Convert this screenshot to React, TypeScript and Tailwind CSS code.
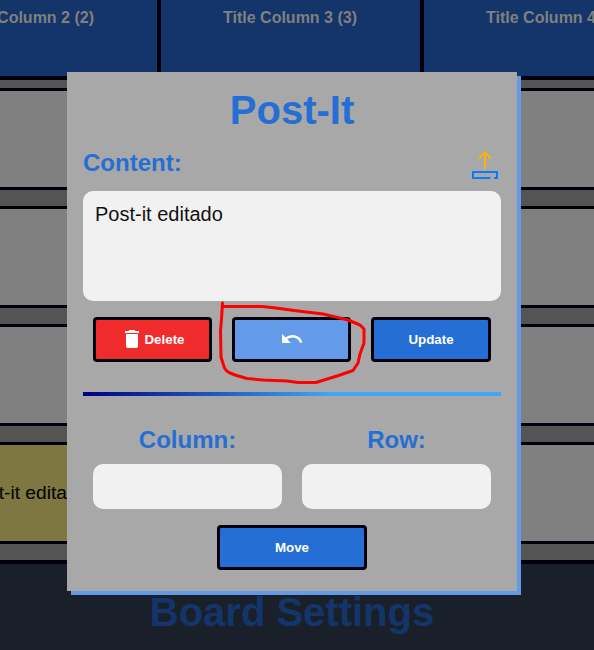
import { ReactNode } from "react";
import { MdDelete, MdUndo } from "react-icons/md";

const columns = [
  { title: "Title Column 2 (2)", post: "Post-it editado" },
  { title: "Title Column 3 (3)", post: "" },
  { title: "Title Column 4 (4)", post: "" },
];

function Slot({ text }: { text?: string }) {
  return (
    <div
      className={`flex h-[102px] shrink-0 items-center justify-center border-y-[3px] border-[#00000a] pr-px text-[19.2px] text-black ${
        text ? "bg-[#7e7741]" : "bg-[#808080]"
      }`}
    >
      {text}
    </div>
  );
}

function Column({ title, post }: { title: string; post: string }) {
  return (
    <section className="flex w-[263px] shrink-0 flex-col border-r-4 border-[#00000a]">
      <h2 className="h-20 border-b-4 border-[#00000a] bg-[#133569] pt-[6px] pr-px text-center text-base font-bold text-[#808080]">
        {title}
      </h2>
      <div className="flex h-[484px] flex-col gap-4 border-b-4 border-[#00000a] bg-[#545454] pt-2">
        <Slot />
        <Slot />
        <Slot />
        <Slot text={post} />
      </div>
    </section>
  );
}

function Button({ children, className }: { children: ReactNode; className: string }) {
  return (
    <button
      className={`flex h-[45px] items-center justify-center rounded-[4px] border-[3px] border-[#00000f] text-[13.333px] font-bold text-white ${className}`}
    >
      {children}
    </button>
  );
}

function UploadIcon() {
  return (
    <svg width="32" height="32" viewBox="0 0 32 32" fill="none" strokeWidth="2">
      <path d="M16 22.5V5.5M10 11.500l6-6 6 6" stroke="#ffb10a" />
      <path d="M21.500 31H4v-6h24v6h-3" stroke="#0a7aff" />
    </svg>
  );
}

export default function App() {
  return (
    <div className="relative h-[650px] w-[594px] overflow-hidden bg-[#1a202a] font-['Liberation_Sans',Arial,sans-serif]">
      <div className="-ml-[102px] flex w-[789px]">
        {columns.map((column) => (
          <Column key={column.title} {...column} />
        ))}
      </div>
      <h1 className="pt-[25px] pr-[10px] text-center text-[40px] leading-[46px] font-bold text-[#133569]">
        Board Settings
      </h1>

      <div
        role="dialog"
        className="absolute top-[72px] left-[67px] flex h-[519px] w-[450px] flex-col bg-[#a8a8a8] px-4 pt-[15px] shadow-[4px_4px_0_#649be8]"
      >
        <h1 className="text-center text-[40px] leading-[46px] font-bold text-[#256ed5]">Post-It</h1>
        <div className="mt-4 flex h-[28px] items-center justify-between text-2xl font-bold text-[#256ed5]">
          <span>Content:</span>
          <UploadIcon />
        </div>
        <div className="mt-[14px] h-[110px] shrink-0 rounded-[10px] bg-[#f1f1f1] px-3 pt-3 text-xl leading-[23px] text-[#111]">
          Post-it editado
        </div>
        <div className="mt-4 grid grid-cols-[119px_119px_120px] gap-5 px-[10px]">
          <Button className="bg-[#ef2b2b]">
            <MdDelete size={24} className="-mt-0.5" />
            Delete
          </Button>
          <Button className="bg-[#649be8]">
            <MdUndo size={24} className="-mt-0.5" />
          </Button>
          <Button className="bg-[#256ed5]">Update</Button>
        </div>
        <div className="mt-[30px] h-1 shrink-0 bg-[linear-gradient(90deg,#000080,#3fa9f5_60%)]" />
        <div className="mt-[30px] grid grid-cols-2 gap-5 px-[10px] text-center text-2xl leading-[28px] font-bold text-[#256ed5]">
          {["Column:", "Row:"].map((label) => (
            <div key={label}>
              {label}
              <div className="mt-[10px] h-[45px] rounded-[10px] bg-[#f1f1f1]" />
            </div>
          ))}
        </div>
        <Button className="mt-4 w-[150px] shrink-0 self-center bg-[#256ed5]">Move</Button>
      </div>

      <svg
        className="absolute top-[295px] left-[210px]"
        width="165"
        height="100"
        viewBox="0 0 165 100"
        fill="none"
        stroke="#ff0000"
        strokeWidth="3"
        strokeLinejoin="round"
        strokeLinecap="round"
      >
        <path d="M12.500 8L11.500 24 10.500 36 11 62 13.500 70Q14.500 75 19 77.500L25 80 37 83.500 53 85 77 86 88 87.500H106L127 81 143 75.500 148 68 150 59 154 48V34L150 30 138 25 113 19 84 15.500 66 13 52 11.500H13" />
      </svg>
    </div>
  );
}
